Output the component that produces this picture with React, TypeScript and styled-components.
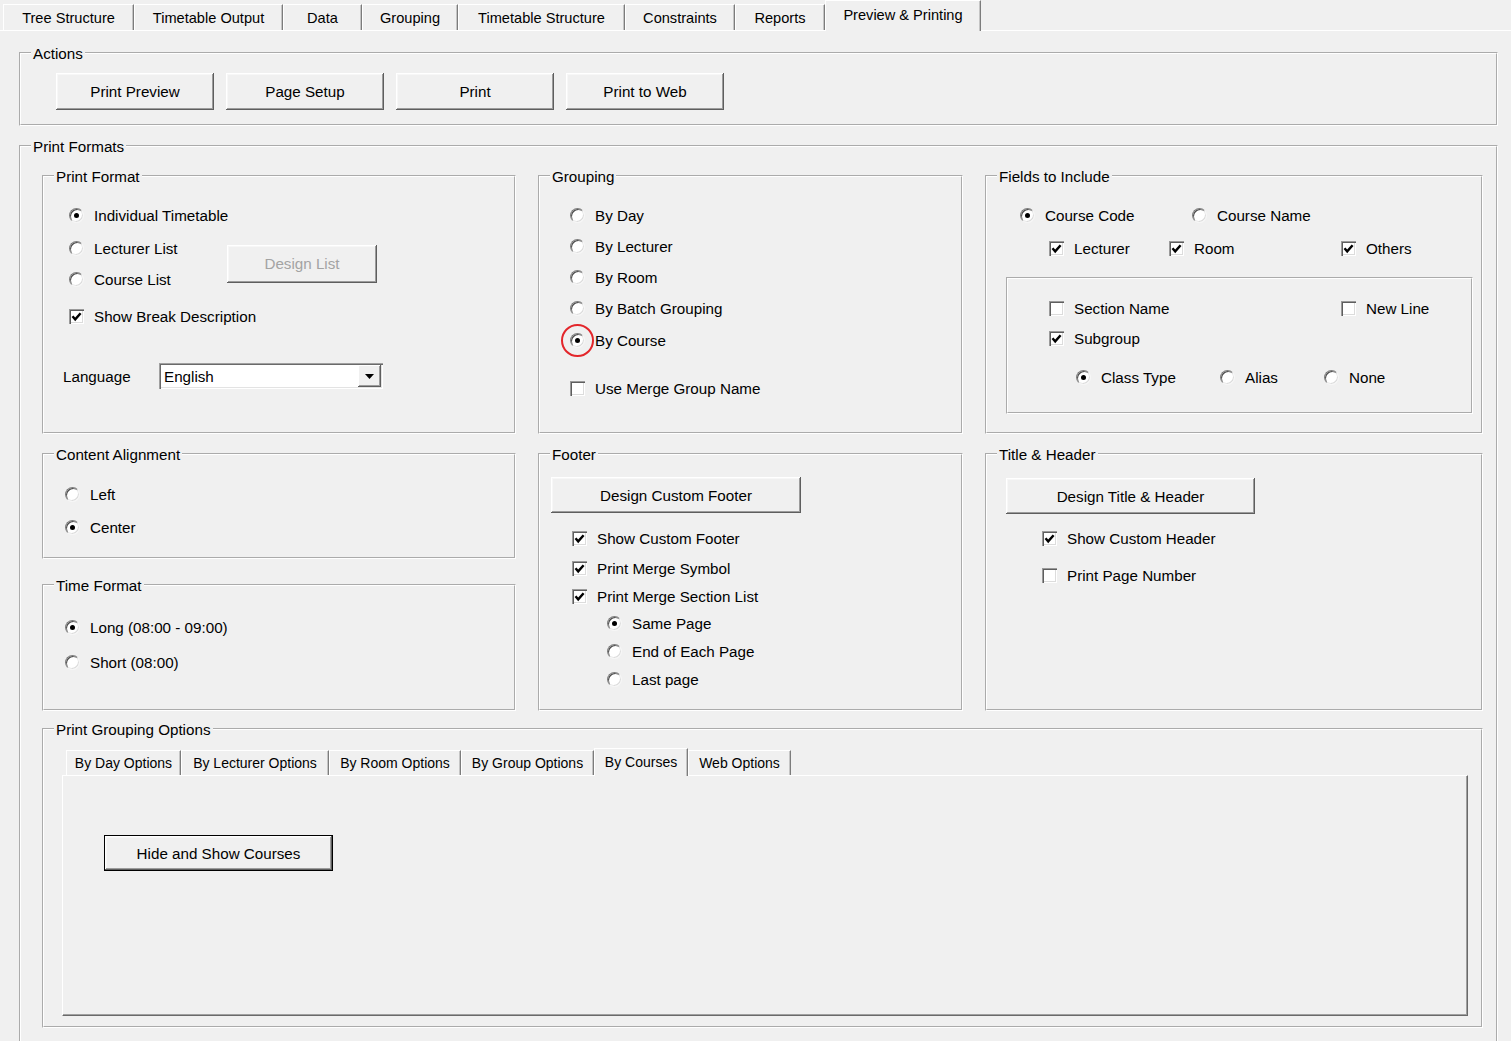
import React from "react";
import styled, { createGlobalStyle } from "styled-components";

const GlobalStyle = createGlobalStyle`
  html, body {
    margin: 0;
    padding: 0;
    background: #f0f0f0;
  }
  body {
    font-family: "Liberation Sans", Arial, sans-serif;
    font-size: 15.2px;
    color: #000;
    overflow: hidden;
  }
  * {
    box-sizing: border-box;
  }
`;

const Window = styled.div`
  width: 1511px;
  height: 1041px;
  overflow: hidden;
  background: #f0f0f0;
`;

const TabStrip = styled.div`
  display: flex;
  align-items: flex-end;
  height: 30px;
  padding-left: 3px;
`;

const Tab = styled.div<{ $w: number; $active?: boolean; $small?: boolean }>`
  width: ${p => p.$w}px;
  height: ${p =>
    p.$small ? (p.$active ? 28 : 25) : p.$active ? 31 : 26}px;
  margin-bottom: ${p => (p.$active ? -1 : 0)}px;
  padding-bottom: ${p => (p.$active ? (p.$small ? 2 : 3) : 0)}px;
  display: flex;
  align-items: center;
  justify-content: center;
  font-size: ${p => (p.$small ? 14 : 14.6)}px;
  white-space: nowrap;
  background: #f0f0f0;
  border-top: 1px solid #fff;
  border-left: 1px solid #fff;
  border-right: 1px solid #7c7c7c;
  box-shadow: inset -1px 0 #c4c4c4;
  position: relative;
  z-index: ${p => (p.$active ? 1 : 0)};
`;

const TabPage = styled.div`
  border-top: 1px solid #fff;
  padding: 13px 0 0 19px;
`;

const GroupBox = styled.fieldset<{ $w?: number; $h: number; $mt?: number; $span?: boolean }>`
  margin: ${p => p.$mt || 0}px 0 0 0;
  padding: 0;
  min-width: 0;
  width: ${p => (p.$w ? `${p.$w}px` : "100%")};
  height: ${p => p.$h}px;
  border: 2px groove #fff;
  grid-column: ${p => (p.$span ? "1 / -1" : "auto")};
`;

const Legend = styled.legend`
  margin-left: 10px;
  padding: 0 2px;
  height: 18px;
  line-height: 20px;
  font-size: 15.2px;
  white-space: nowrap;
`;

const GroupBody = styled.div<{ $pl: number; $pt?: number }>`
  padding-left: ${p => p.$pl}px;
  padding-top: ${p => p.$pt || 0}px;
  display: flex;
  flex-direction: column;
  align-items: flex-start;
`;

const ButtonRow = styled.div`
  display: flex;
  gap: 12px;
`;

const Button = styled.button<{ $w: number; $h: number; $mt?: number; $ml?: number; $default?: boolean }>`
  width: ${p => p.$w}px;
  height: ${p => p.$h}px;
  margin: ${p => p.$mt || 0}px 0 0 ${p => p.$ml || 0}px;
  padding: 0;
  font-family: inherit;
  font-size: 15.2px;
  color: #000;
  background: #f0f0f0;
  border: ${p => (p.$default ? "1px solid #000" : "none")};
  box-shadow: inset -1px -1px #5e5e5e, inset 1px 1px #fff, inset -2px -2px #9c9c9c,
    inset 2px 2px #f7f7f7;
  flex: none;
  &:disabled {
    color: #a3a3a3;
  }
`;

const FormatGrid = styled.div`
  display: grid;
  grid-template-columns: 474px 425px 498px;
  column-gap: 22px;
  align-items: start;
  padding: 12px 0 0 21px;
`;

const LeftStack = styled.div`
  display: flex;
  flex-direction: column;
  gap: 17px;
  margin-top: 11px;
`;

const OptionRow = styled.label<{ $mt?: number; $ml?: number }>`
  display: flex;
  align-items: center;
  gap: 10px;
  height: 20px;
  margin: ${p => p.$mt || 0}px 0 0 ${p => p.$ml || 0}px;
  white-space: nowrap;
`;

const ControlWrap = styled.span`
  position: relative;
  display: flex;
  flex: none;
`;

const Radio = styled.span<{ $checked?: boolean }>`
  width: 15px;
  height: 15px;
  border-radius: 50%;
  background: #fff;
  border: 1px solid;
  border-color: #7e7e7e #f6f6f6 #f6f6f6 #7e7e7e;
  box-shadow: inset 1px 1px 0 #4e4e4e, inset -1px -1px 0 #dcdcdc;
  display: flex;
  align-items: center;
  justify-content: center;
  &::after {
    content: "";
    display: ${p => (p.$checked ? "block" : "none")};
    width: 5px;
    height: 5px;
    border-radius: 50%;
    background: #000;
  }
`;

const Check = styled.span`
  width: 15px;
  height: 15px;
  background: #fff;
  box-shadow: inset 1px 1px #9a9a9a, inset 2px 2px #5e5e5e, inset -1px -1px #fff,
    inset -2px -2px #dcdcdc;
  display: flex;
  align-items: center;
  justify-content: center;
`;

const Annotation = styled.span`
  position: absolute;
  left: -9px;
  top: -9px;
  width: 33px;
  height: 33px;
  border: 2px solid #e3262b;
  border-radius: 50%;
`;

const OptionList = styled.div<{ $gap: number; $mt?: number; $ml?: number }>`
  display: flex;
  flex-direction: column;
  gap: ${p => p.$gap}px;
  margin: ${p => p.$mt || 0}px 0 0 ${p => p.$ml || 0}px;
`;

const ColumnsRow = styled.div<{ $cols: string; $mt?: number; $ml?: number }>`
  display: grid;
  grid-template-columns: ${p => p.$cols};
  align-items: center;
  margin: ${p => p.$mt || 0}px 0 0 ${p => p.$ml || 0}px;
`;

const FieldLabel = styled.span`
  white-space: nowrap;
`;

const Combo = styled.div`
  width: 224px;
  height: 26px;
  background: #fff;
  box-shadow: inset 1px 1px #a0a0a0, inset 2px 2px #6a6a6a, inset -1px -1px #fff,
    inset -2px -2px #e3e3e3;
  display: flex;
  align-items: center;
  justify-content: space-between;
  padding: 2px 2px 2px 5px;
`;

const ComboArrow = styled.span`
  width: 23px;
  height: 22px;
  background: #f0f0f0;
  box-shadow: inset -1px -1px #5e5e5e, inset 1px 1px #fff, inset -2px -2px #9c9c9c;
  display: flex;
  align-items: center;
  justify-content: center;
`;

const InnerBox = styled.div`
  width: 467px;
  height: 137px;
  margin: 19px 0 0 -14px;
  padding-left: 41px;
  border: 2px groove #fff;
  display: flex;
  flex-direction: column;
`;

const InnerTabs = styled.div`
  display: flex;
  align-items: flex-end;
  height: 27px;
  margin: 10px 0 0 18px;
  padding-left: 4px;
`;

const TabPane = styled.div`
  width: 1406px;
  height: 241px;
  margin-left: 18px;
  border-top: 1px solid #fff;
  border-left: 1px solid #fff;
  border-right: 1px solid #6a6a6a;
  border-bottom: 1px solid #6a6a6a;
  box-shadow: inset -1px -1px #a0a0a0;
  display: flex;
  align-items: flex-start;
`;

const CheckMark = () => (
  <svg width="13" height="13" viewBox="0 0 13 13">
    <polyline points="2.5,6.3 5.2,9.4 10.6,3.2" fill="none" stroke="#000" strokeWidth="2.4" />
  </svg>
);

interface ChoiceProps {
  label: string;
  kind: "radio" | "check";
  checked?: boolean;
  mt?: number;
  ml?: number;
  marked?: boolean;
}

const Choice: React.FC<ChoiceProps> = ({ label, kind, checked, mt, ml, marked }) => (
  <OptionRow $mt={mt} $ml={ml}>
    <ControlWrap>
      {kind === "radio" ? (
        <Radio $checked={checked} />
      ) : (
        <Check>{checked && <CheckMark />}</Check>
      )}
      {marked && <Annotation />}
    </ControlWrap>
    <span>{label}</span>
  </OptionRow>
);

const mainTabs = [
  { label: "Tree Structure", w: 131 },
  { label: "Timetable Output", w: 149 },
  { label: "Data", w: 79 },
  { label: "Grouping", w: 96 },
  { label: "Timetable Structure", w: 167 },
  { label: "Constraints", w: 110 },
  { label: "Reports", w: 90 },
  { label: "Preview & Printing", w: 156, active: true },
];

const optionTabs = [
  { label: "By Day Options", w: 115 },
  { label: "By Lecturer Options", w: 148 },
  { label: "By Room Options", w: 132 },
  { label: "By Group Options", w: 133 },
  { label: "By Courses", w: 94, active: true },
  { label: "Web Options", w: 103 },
];

const actions = ["Print Preview", "Page Setup", "Print", "Print to Web"];

export default function App() {
  return (
    <Window>
      <GlobalStyle />
      <TabStrip>
        {mainTabs.map(t => (
          <Tab key={t.label} $w={t.w} $active={t.active}>
            {t.label}
          </Tab>
        ))}
      </TabStrip>
      <TabPage>
        <GroupBox $w={1479} $h={82}>
          <Legend>Actions</Legend>
          <GroupBody $pl={35} $pt={11}>
            <ButtonRow>
              {actions.map(a => (
                <Button key={a} $w={158} $h={37}>
                  {a}
                </Button>
              ))}
            </ButtonRow>
          </GroupBody>
        </GroupBox>

        <GroupBox $w={1479} $h={910} $mt={11}>
          <Legend>Print Formats</Legend>
          <FormatGrid>
            <GroupBox $h={267}>
              <Legend>Print Format</Legend>
              <GroupBody $pl={25}>
                <Choice kind="radio" label="Individual Timetable" checked mt={20} />
                <ColumnsRow $cols="158px 150px" $mt={13}>
                  <OptionList $gap={11}>
                    <Choice kind="radio" label="Lecturer List" />
                    <Choice kind="radio" label="Course List" />
                  </OptionList>
                  <Button $w={150} $h={38} disabled>
                    Design List
                  </Button>
                </ColumnsRow>
                <Choice kind="check" label="Show Break Description" checked mt={17} />
                <ColumnsRow $cols="96px 224px" $mt={37} $ml={-6}>
                  <FieldLabel>Language</FieldLabel>
                  <Combo>
                    <span>English</span>
                    <ComboArrow>
                      <svg width="9" height="5" viewBox="0 0 9 5">
                        <polygon points="0,0 9,0 4.5,5" fill="#000" />
                      </svg>
                    </ComboArrow>
                  </Combo>
                </ColumnsRow>
              </GroupBody>
            </GroupBox>

            <GroupBox $h={267}>
              <Legend>Grouping</Legend>
              <GroupBody $pl={30}>
                <OptionList $gap={11.3} $mt={20}>
                  <Choice kind="radio" label="By Day" />
                  <Choice kind="radio" label="By Lecturer" />
                  <Choice kind="radio" label="By Room" />
                  <Choice kind="radio" label="By Batch Grouping" />
                  <Choice kind="radio" label="By Course" checked marked />
                </OptionList>
                <Choice kind="check" label="Use Merge Group Name" mt={28} />
              </GroupBody>
            </GroupBox>

            <GroupBox $h={267}>
              <Legend>Fields to Include</Legend>
              <GroupBody $pl={33}>
                <ColumnsRow $cols="172px auto" $mt={20}>
                  <Choice kind="radio" label="Course Code" checked />
                  <Choice kind="radio" label="Course Name" />
                </ColumnsRow>
                <ColumnsRow $cols="120px 172px auto" $mt={13} $ml={29}>
                  <Choice kind="check" label="Lecturer" checked />
                  <Choice kind="check" label="Room" checked />
                  <Choice kind="check" label="Others" checked />
                </ColumnsRow>
                <InnerBox>
                  <ColumnsRow $cols="292px auto" $mt={19}>
                    <Choice kind="check" label="Section Name" />
                    <Choice kind="check" label="New Line" />
                  </ColumnsRow>
                  <Choice kind="check" label="Subgroup" checked mt={10} />
                  <ColumnsRow $cols="144px 104px auto" $mt={19} $ml={27}>
                    <Choice kind="radio" label="Class Type" checked />
                    <Choice kind="radio" label="Alias" />
                    <Choice kind="radio" label="None" />
                  </ColumnsRow>
                </InnerBox>
              </GroupBody>
            </GroupBox>

            <LeftStack>
              <GroupBox $h={114}>
                <Legend>Content Alignment</Legend>
                <GroupBody $pl={21}>
                  <OptionList $gap={13} $mt={21}>
                    <Choice kind="radio" label="Left" />
                    <Choice kind="radio" label="Center" checked />
                  </OptionList>
                </GroupBody>
              </GroupBox>
              <GroupBox $h={135}>
                <Legend>Time Format</Legend>
                <GroupBody $pl={21}>
                  <OptionList $gap={15} $mt={23}>
                    <Choice kind="radio" label="Long (08:00 - 09:00)" checked />
                    <Choice kind="radio" label="Short (08:00)" />
                  </OptionList>
                </GroupBody>
              </GroupBox>
            </LeftStack>

            <GroupBox $h={266} $mt={11}>
              <Legend>Footer</Legend>
              <GroupBody $pl={11}>
                <Button $w={250} $h={36} $mt={14}>
                  Design Custom Footer
                </Button>
                <OptionList $gap={8} $mt={15} $ml={21}>
                  <Choice kind="check" label="Show Custom Footer" checked />
                  <Choice kind="check" label="Print Merge Symbol" checked mt={2} />
                  <Choice kind="check" label="Print Merge Section List" checked />
                  <OptionList $gap={8} $ml={35}>
                    <Choice kind="radio" label="Same Page" checked mt={-1} />
                    <Choice kind="radio" label="End of Each Page" />
                    <Choice kind="radio" label="Last page" />
                  </OptionList>
                </OptionList>
              </GroupBody>
            </GroupBox>

            <GroupBox $h={266} $mt={11}>
              <Legend>Title &amp; Header</Legend>
              <GroupBody $pl={19}>
                <Button $w={249} $h={36} $mt={15}>
                  Design Title &amp; Header
                </Button>
                <OptionList $gap={17} $mt={14} $ml={36}>
                  <Choice kind="check" label="Show Custom Header" checked />
                  <Choice kind="check" label="Print Page Number" />
                </OptionList>
              </GroupBody>
            </GroupBox>

            <GroupBox $h={308} $mt={9} $span>
              <Legend>Print Grouping Options</Legend>
              <InnerTabs>
                {optionTabs.map(t => (
                  <Tab key={t.label} $w={t.w} $active={t.active} $small>
                    {t.label}
                  </Tab>
                ))}
              </InnerTabs>
              <TabPane>
                <Button $w={229} $h={36} $mt={59} $ml={41} $default>
                  Hide and Show Courses
                </Button>
              </TabPane>
            </GroupBox>
          </FormatGrid>
        </GroupBox>
      </TabPage>
    </Window>
  );
}
